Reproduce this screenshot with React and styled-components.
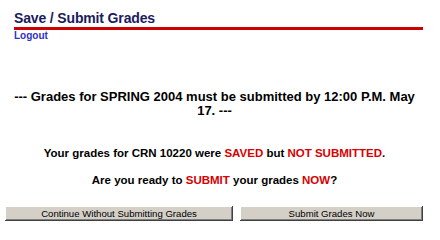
import React from "react";
import styled, { createGlobalStyle } from "styled-components";

const Global = createGlobalStyle`
  html, body { margin: 0; padding: 0; background: #ffffff; }
  body { font-family: "Liberation Sans", Arial, sans-serif; }
`;

const Page = styled.div`
  width: 440px;
  height: 233px;
  overflow: hidden;
  padding-top: 10px;
  box-sizing: border-box;
`;

const Header = styled.div`
  margin-left: 14px;
  width: 409px;
`;

const Title = styled.h1`
  margin: 0;
  font-size: 14px;
  line-height: 16px;
  font-weight: bold;
  color: #1b1b5e;
  letter-spacing: -0.15px;
`;

const Rule = styled.div`
  margin-top: 1px;
  height: 3px;
  background: #cc0000;
`;

const Logout = styled.a`
  display: block;
  font-size: 10px;
  line-height: 11px;
  font-weight: bold;
  color: #3030c8;
  text-decoration: none;
  cursor: pointer;
`;

const Content = styled.div`
  margin-left: 8px;
  width: 413px;
`;

const Message = styled.p`
  margin: ${(p) => p.$top}px 0 0 0;
  text-align: center;
  font-weight: bold;
  color: #000000;
  font-size: ${(p) => p.$size}px;
  line-height: ${(p) => p.$lh}px;
`;

const Hot = styled.span`
  color: #d80000;
`;

const ButtonRow = styled.div`
  display: flex;
  gap: 7px;
  margin-top: 19px;
  margin-left: 5px;
`;

const Button = styled.button`
  width: ${(p) => p.$w}px;
  height: 15px;
  padding: 0;
  border: none;
  background: #d4d0c8;
  box-shadow: inset -1px -1px #404040, inset 1px 1px #ffffff,
    inset -2px -2px #808080;
  font-family: "Liberation Sans", Arial, sans-serif;
  font-size: 9.6px;
  line-height: 15px;
  color: #000000;
  text-align: center;
  cursor: pointer;
`;

export default function App() {
  return (
    <>
      <Global />
      <Page>
        <Header>
          <Title>Save / Submit Grades</Title>
          <Rule />
          <Logout>Logout</Logout>
        </Header>
        <Content>
          <Message $top={49} $size={13} $lh={14}>
            --- Grades for SPRING 2004 must be submitted by 12:00 P.M. May 17. ---
          </Message>
          <Message $top={28} $size={11.5} $lh={14}>
            Your grades for CRN 10220 were <Hot>SAVED</Hot> but{" "}
            <Hot>NOT SUBMITTED</Hot>.
          </Message>
          <Message $top={12.5} $size={11.5} $lh={14}>
            Are you ready to <Hot>SUBMIT</Hot> your grades <Hot>NOW</Hot>?
          </Message>
        </Content>
        <ButtonRow>
          <Button $w={228}>Continue Without Submitting Grades</Button>
          <Button $w={183}>Submit Grades Now</Button>
        </ButtonRow>
      </Page>
    </>
  );
}
